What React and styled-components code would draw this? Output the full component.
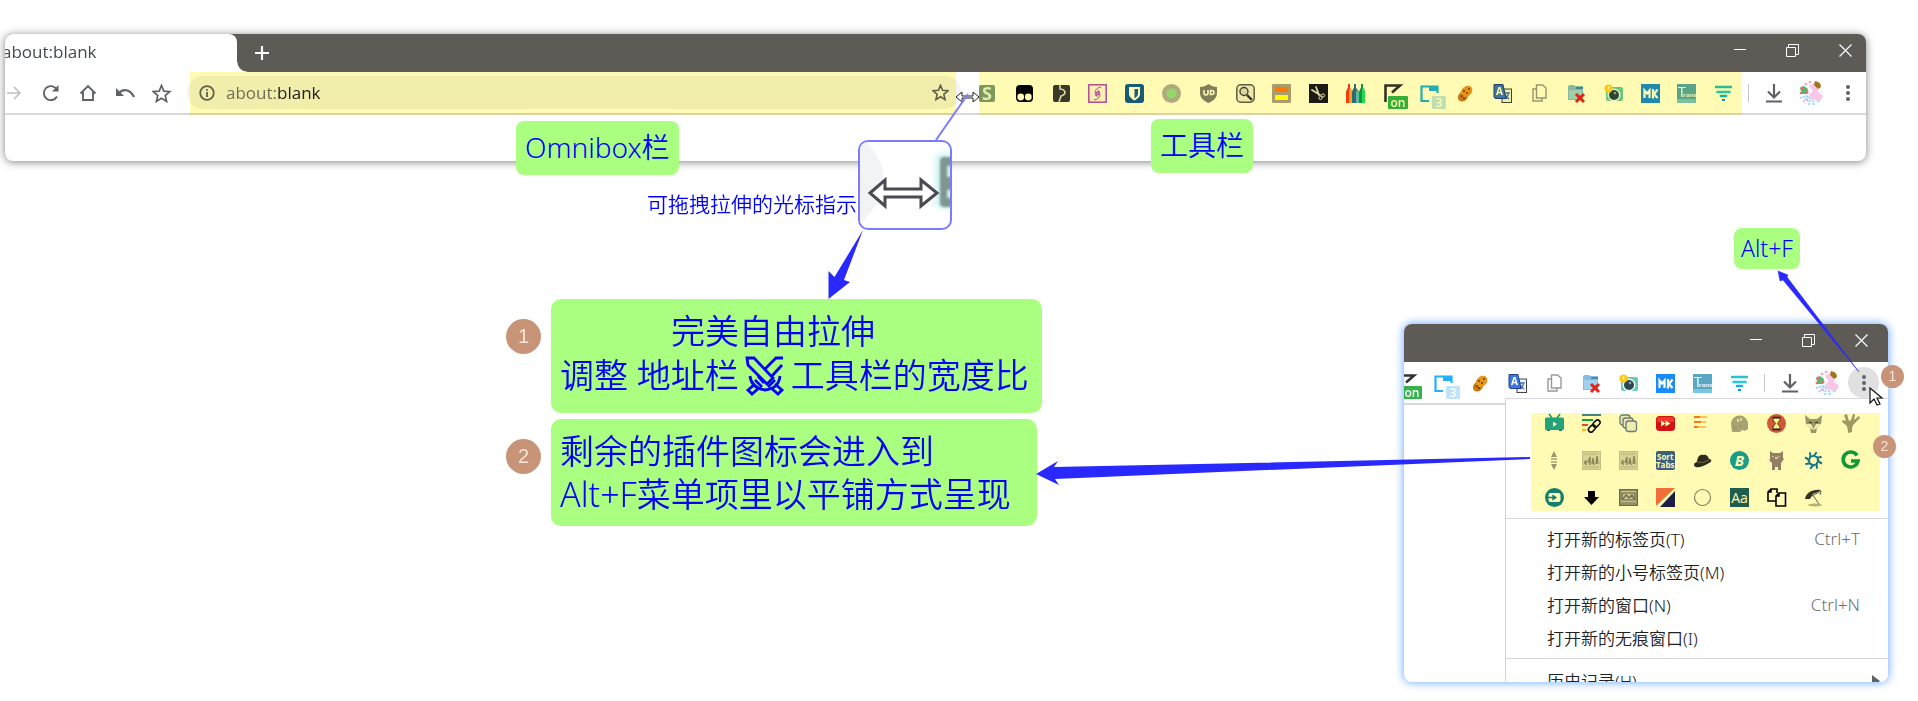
import styled, { createGlobalStyle, css } from "styled-components";

const GlobalStyle = createGlobalStyle`
    *{
        box-sizing: border-box;
    }
    body{
        margin: 0;
        background: #fff;
        font-family: "Open Sans", "Noto Sans CJK SC", sans-serif;
    }
    button{
        padding: 0;
        border: 0;
        background: none;
        font: inherit;
        color: inherit;
    }
`

/* extension icons, all drawn on a 19 x 19 grid */
const glyphs = {
    stylus: <>
        <rect x="1" y="1" width="16" height="17" rx="2" fill="#7d9a86" />
        <text x="9" y="16" fontSize="18" fontWeight="700" textAnchor="middle" fill="#dff5e8">S</text>
    </>,
    monkey: <>
        <path d="M1 5q0-4 4-4h9q4 0 4 4v9q0 4-4 4H5q-4 0-4-4z" fill="#000" />
        <circle cx="5.700" cy="13" r="3.400" fill="#fff" />
        <circle cx="13.300" cy="13" r="3.400" fill="#fff" />
    </>,
    puzzle: <>
        <rect x="1" y="1" width="17" height="17" rx="2" fill="#3a3a3a" />
        <path d="M8 1v4q4 0 5 3 0 3-4 4-1 3-2 6" stroke="#ddd" strokeWidth="1.600" fill="none" />
    </>,
    spiral: <>
        <rect x=".8" y=".8" width="17.400" height="17.400" fill="#fdf3ff" stroke="#b04fd0" strokeWidth="1.500" />
        <path d="M13 3Q7 4 7 9q1 3 4 1V7q-3-1-3 5M6 16q6-1 6-6-1-3-4-1v3q3 1 3-5" stroke="#b04fd0" strokeWidth="1" fill="none" />
    </>,
    shield: <>
        <rect width="19" height="19" rx="3" fill="#175ea8" />
        <path d="M4 3h11v7c0 3-3 5-5.500 6.500C7 15 4 13 4 10z" fill="#fff" />
        <path d="M9.500 5H13v5c0 2-2 3-3.500 4.500z" fill="#175ea8" />
    </>,
    dot: <>
        <circle cx="9.500" cy="9.500" r="9.500" fill="#aeaeae" />
        <circle cx="9.500" cy="9.500" r="5" fill="#93dd92" />
    </>,
    ublock: <>
        <path d="M9.500 0C12 2 15 3 18 3v6c0 5-4 8-8.500 10C5 17 1 14 1 9V3c3 0 6-1 8.500-3z" fill="#808080" />
        <path d="M5 6v3q0 2 2 2t2-2V6M11.500 6.500h1q2.500 0 2.500 2t-2.500 2h-1z" fill="none" stroke="#fff" strokeWidth="1.500" />
    </>,
    search: <>
        <rect x=".8" y=".8" width="17.400" height="17.400" rx="4" fill="#eee" stroke="#5d5d5d" strokeWidth="1.500" />
        <circle cx="8" cy="7.500" r="4" fill="#d8dde0" stroke="#444" strokeWidth="1.400" />
        <path d="M11 11l5 5" stroke="#333" strokeWidth="2.400" />
    </>,
    bars: <>
        <rect width="19" height="19" rx="1" fill="#aaa098" />
        <rect x="3" y="3" width="13" height="5" fill="#ff7b00" />
        <rect x="3" y="11" width="13" height="5" fill="#ff0" />
    </>,
    scissors: <>
        <rect width="19" height="19" fill="#1b1b1b" />
        <path d="M3 6l8 5M7 3l3 8" stroke="#ddd" strokeWidth="1.800" strokeLinecap="round" />
        <circle cx="11.500" cy="14" r="1.600" fill="none" stroke="#ddd" />
        <circle cx="14" cy="11.500" r="1.600" fill="none" stroke="#ddd" />
    </>,
    pencils: <>
        <path d="M0 8l1-3 1-1V0h2v4l1 1 1 3v11H0z" fill="#f53b18" />
        <path d="M3 5h2l1 3v11H3z" fill="#ffa51d" />
        <path d="M6 8l1-3 1-1V0h2v4l1 1 2 3v11H6z" fill="#3368ad" />
        <path d="M10 6l3 2v11h-3z" fill="#5abde0" />
        <path d="M13 8l1-3 1-1V0h2v4l1 1 1 3v11h-6z" fill="#12964b" />
        <path d="M16 5h2l1 3v11h-3z" fill="#1fe063" />
    </>,
    turn: <>
        <path d="M2.500 18V1.500H17L9 8.500" fill="none" stroke="#333" strokeWidth="2.600" />
        <rect x="5" y="12" width="20" height="13" rx="1" fill="#35b34a" />
        <text x="15" y="22.500" fontSize="12" fontWeight="600" textAnchor="middle" fill="#fff">on</text>
    </>,
    tabs: <>
        <path d="M9 17H1.500V2.500h16V9" fill="none" stroke="#22b0ff" strokeWidth="2.200" />
        <path d="M9 2h9v5H9z" fill="#22b0ff" />
        <rect x="12" y="12" width="14" height="13" rx="1" fill="#bfe3fd" />
        <text x="19" y="22.500" fontSize="12" fontWeight="600" textAnchor="middle" fill="#fff">3</text>
    </>,
    cookie: <>
        <ellipse cx="7" cy="12.500" rx="5.500" ry="4.500" fill="#c8770c" transform="rotate(-45 7 12.500)" />
        <ellipse cx="10.500" cy="7.500" rx="6.500" ry="5" fill="#e8961a" transform="rotate(-40 10.500 7.500)" />
        <g fill="#6b3b05"><circle cx="8" cy="7" r="1" /><circle cx="13" cy="5" r="1" /><circle cx="11" cy="9" r="1" /><circle cx="6" cy="12" r="1" /><circle cx="8" cy="14" r="1" /></g>
    </>,
    translate: <>
        <rect x="9" y="5" width="9.500" height="13.500" fill="#f3f3f3" stroke="#444" />
        <path d="M12 9h4l-3 6M12 11l4 4" stroke="#3b6fd0" strokeWidth="1.300" fill="none" />
        <path d="M1 .5h9l3 14H3q-2 0-2-2z" fill="#3d78e0" stroke="#25408a" />
        <text x="6.500" y="11" fontSize="10" fontWeight="700" textAnchor="middle" fill="#fff">A</text>
    </>,
    copy: <>
        <path d="M6.500 1h6l3.500 3v10H6.500zM6 5H3v12h9v-3" fill="none" stroke="#999" strokeWidth="1.400" />
    </>,
    folder: <>
        <path d="M1 3q0-2 2-2h4l1 1h8v14H1z" fill="#83bde0" />
        <path d="M9 3h7v2H9z" fill="#438cb7" />
        <path d="M2 6h13v9H2z" fill="#a0d2ee" />
        <path d="M9 10l8 8M17 10l-8 8" stroke="#e0251b" strokeWidth="3" />
    </>,
    camera: <>
        <rect x="2" y="3" width="17" height="14" rx="2" fill="#67cbb0" />
        <circle cx="10" cy="11" r="6.500" fill="#f4f8f8" />
        <circle cx="10" cy="11" r="5" fill="#2e4650" />
        <circle cx="11" cy="9" r="1.300" fill="#8fa7b0" />
        <circle cx="4.500" cy="4.500" r="4" fill="#ffca16" />
        <path d="M4.500 2.500v3" stroke="#fff" strokeWidth="1.300" />
    </>,
    mk: <>
        <rect width="19" height="19" fill="#1c8cf5" />
        <path d="M3.500 14V6.500l2.500 3 2.500-3V14M12 5v9.500M16.500 5.500L13 10l3.500 4" fill="none" stroke="#fff" strokeWidth="2.200" />
    </>,
    trans: <>
        <rect width="19" height="19" fill="#5aa7c4" />
        <path d="M0 15h19v4H0z" fill="#79c5e4" />
        <text x="1" y="13" fontSize="14" fill="#fff">T</text>
        <text x="6" y="13" fontSize="6" fontWeight="700" fill="#e7f6ff">rans</text>
    </>,
    filter: <>
        <path d="M1 3h17" stroke="#27c1d0" strokeWidth="2.600" />
        <path d="M3.500 8h12" stroke="#25cbdf" strokeWidth="2.600" strokeLinecap="round" />
        <path d="M7 12h5" stroke="#15b3e8" strokeWidth="2.600" strokeLinecap="round" />
        <path d="M8 15h3v2H8z" fill="#1193d8" />
    </>,
    tv: <>
        <path d="M4 0l3 4M15 0l-3 4" stroke="#23a4ac" strokeWidth="1.800" />
        <rect x="0" y="3.500" width="19" height="12.500" rx="1.500" fill="#23a4ac" />
        <path d="M2 16h3v1H2zM14 16h3v1h-3z" fill="#14797f" />
        <path d="M8 7.500l4 2.500-4 3z" fill="#fff" />
    </>,
    links: <>
        <path d="M0 1h19" stroke="#4386b5" strokeWidth="2" />
        <path d="M0 6h11" stroke="#19a34b" strokeWidth="2" />
        <path d="M0 11h6" stroke="#ee4b3b" strokeWidth="2" />
        <path d="M0 16h4" stroke="#ffc400" strokeWidth="2" />
        <g fill="none" stroke="#111" strokeWidth="1.600">
            <rect x="10.500" y="7" width="8" height="5" rx="2.500" transform="rotate(-45 14.500 9.500)" />
            <rect x="6" y="12" width="8" height="5" rx="2.500" transform="rotate(-45 10 14.500)" />
        </g>
    </>,
    stack: <g fill="#eef1f7" stroke="#6a7da8" strokeWidth="1.300">
        <rect x="1" y="1" width="10" height="10" rx="2.500" />
        <rect x="4" y="4" width="10" height="10" rx="2.500" />
        <rect x="7" y="7" width="10.500" height="10.500" rx="2.500" />
    </g>,
    forward: <>
        <rect y="2" width="19" height="15" rx="3.500" fill="#d0141b" />
        <path d="M1 5q0-2 3-2h11q3 0 3 2v3H1z" fill="#ee3b3b" />
        <path d="M5 6.500l4.500 3L5 12.500zM9.500 6.500l5 3-5 3z" fill="#fff" />
    </>,
    speed: <>
        <path d="M1 3h6M1 8h7M1 13h4" stroke="#f77b23" strokeWidth="2.200" />
        <path d="M7 3h7M8 8h5M5 13h8" stroke="#ffc48d" strokeWidth="2" />
    </>,
    ghost: <>
        <path d="M1 10a8.500 8.500 0 0117 0v5l-3 2-3-1-2 2H2z" fill="#a7a7a0" />
        <path d="M8 5v3M11 4v3" stroke="#fff" strokeWidth="1.300" />
        <path d="M3 14h4M9 12h3" stroke="#8d8d85" />
    </>,
    hourglass: <>
        <circle cx="9.500" cy="9.500" r="9.500" fill="#d05a4c" />
        <path d="M6 4h7v2L10.500 9.500 13 13v2H6v-2l2.500-3.500L6 6z" fill="#fff3bb" stroke="#3b2b2b" strokeWidth=".8" />
        <path d="M5.500 3.500h8M5.500 15.500h8" stroke="#222" strokeWidth="1.400" />
    </>,
    fox: <>
        <path d="M1 1l5 4h7l5-4-1 9-4 4-1 5H7l-1-5-4-4z" fill="#99998f" />
        <path d="M2 10h5l2.500 5L12 10h5l-4 4-3.500 2L6 14z" fill="#f2f2e8" />
        <path d="M5 8l3 1M14 8l-3 1" stroke="#333" strokeWidth="1.300" />
    </>,
    tree: <path d="M7 19c0-5-1-6-2-8L1 8l1-2 3 1-2-6 3-1 2 7 2-1 2-6 2 0-1 6 5-4 1 2-6 6c-2 2-2 4-2 8z" fill="#9d9c88" />,
    scroll: <>
        <path d="M6 6l3-6 3 6zM6 13l3 6 3-6z" fill="#999" />
        <path d="M6 8h6M6 11h6" stroke="#bcbcb5" strokeWidth="2" />
    </>,
    photo: <>
        <rect x=".5" y=".5" width="18" height="18" fill="#d8d8d0" stroke="#c3c3ba" />
        <path d="M3 13v-3M4 14V9M6 12l2-6v8M10 13l1-6 1 7M14 13l1-8 1 8" stroke="#88887f" strokeWidth="1.400" fill="none" />
        <path d="M2 3h14M2 16h15" stroke="#b6b6ae" />
    </>,
    sort: <>
        <rect width="19" height="19" rx="2" fill="#3d62ac" />
        <text x="1" y="8.500" fontSize="8" fontWeight="700" fill="#fff">Sort</text>
        <text x="18.500" y="17" fontSize="8" fontWeight="700" textAnchor="end" fill="#fff">Tabs</text>
    </>,
    hat: <>
        <path d="M1 14c0-3 3-2 3-4 1-5 3-7 6-6 3-1 5 1 6 4 3 0 3 3 0 4-5 3-14 7-15 2z" fill="#2d2925" />
        <path d="M4 11q6 2 12-2" stroke="#736b61" fill="none" />
    </>,
    bitly: <>
        <circle cx="9.500" cy="9.500" r="9.500" fill="#1aa0c0" />
        <text x="9.500" y="15" fontSize="15" fontWeight="700" fontStyle="italic" textAnchor="middle" fill="#fff">B</text>
    </>,
    cat: <>
        <path d="M3 0l3 2h7l3-2v9l-2 1H5L3 9z" fill="#93838e" />
        <path d="M6 10h7l3-3 1 1-3 4v7h-3v-3H8v3H5v-7L2 9l1-1z" fill="#93838e" />
        <path d="M6 5v1M12 5v1M8 7h3" stroke="#efe8ec" strokeWidth="1.300" />
    </>,
    aperture: <g stroke="#1177c2" fill="none">
        {[0, 45, 90, 135, 180, 225, 270, 315].map((angle) => (
            <path key={angle} d="M7.500 5.500Q11 5 12.500 1" strokeWidth="2" transform={`rotate(${angle} 9.500 9.500)`} />
        ))}
        <circle cx="9.500" cy="9.500" r="4.500" strokeWidth="1.200" />
    </g>,
    gee: <path d="M16 4.500A7.500 7.500 0 1017 10h-7" fill="none" stroke="#0f9d4e" strokeWidth="3.600" />,
    login: <>
        <circle cx="9.500" cy="9.500" r="9.500" fill="#13809c" />
        <rect x="3.500" y="5" width="12" height="9" rx="2" fill="#fff" />
        <path d="M3 9.500h6M8 7.500l3 2-3 2z" stroke="#13809c" strokeWidth="1.300" fill="#13809c" />
    </>,
    down: <path d="M6 3h7v6h4l-7.500 8L2 9h4z" fill="#000" />,
    picture: <>
        <rect x=".8" y="1.800" width="17.400" height="15.400" fill="#c6c6bf" stroke="#666" strokeWidth="1.500" />
        <path d="M3 5h13v7H3zM4 11l3-4 3 3 3-3 2 4M2 15h15" stroke="#666" strokeWidth="1.200" fill="none" />
    </>,
    split: <>
        <path d="M0 0h19L0 18z" fill="#f2704f" />
        <path d="M19 3v16H4z" fill="#1d1e5c" />
    </>,
    ring: <circle cx="9.500" cy="9.500" r="8" fill="none" stroke="#87877a" strokeWidth="1.200" />,
    aa: <>
        <rect width="19" height="19" fill="#1f6070" />
        <text x="9.500" y="15" fontSize="14" textAnchor="middle" fill="#fff">Aa</text>
    </>,
    pages: <g fill="none" stroke="#000" strokeWidth="1.600">
        <path d="M9 13H1V4l3-3h6v4M4 1v3H1" />
        <path d="M9 8l3-3h6.500v13H9zM12 5v3H9" />
    </g>,
    umbrella: <>
        <path d="M1 11C2 5 8 1 17 2L14 4 9 6 6 11z" fill="#333" />
        <path d="M8 8l9-5-1 4M8 6l7 10" stroke="#666" fill="none" />
        <ellipse cx="11" cy="17" rx="7" ry="1.500" fill="#b5b5a4" />
    </>,
}

const overflowing = ["turn", "tabs", "cookie", "translate", "copy", "folder", "camera", "mk", "trans", "filter"]
const pinned = ["stylus", "monkey", "puzzle", "spiral", "shield", "dot", "ublock", "search", "bars", "scissors", "pencils", ...overflowing]
const tiled = [
    "tv", "links", "stack", "forward", "speed", "ghost", "hourglass", "fox", "tree",
    "scroll", "photo", "photo", "sort", "hat", "bitly", "cat", "aperture", "gee",
    "login", "down", "picture", "split", "ring", "aa", "pages", "umbrella",
]

function Extension({ name }) {
    return (
        <ExtButton type="button" aria-label={name}>
            <Glyph viewBox="0 0 19 19">{glyphs[name]}</Glyph>
        </ExtButton>
    );
}

function WindowControls({ tucked }) {
    return (
        <Controls $tucked={tucked}>
            <ControlButton type="button" aria-label="minimize">
                <svg width="12" height="12"><path d="M0 5.500h12" stroke="#fff" /></svg>
            </ControlButton>
            <ControlButton type="button" aria-label="restore">
                <svg width="13" height="13" fill="none" stroke="#fff"><path d="M.5 3.500h9v9h-9zM2.500 3V.5h10v10H10" /></svg>
            </ControlButton>
            <ControlButton type="button" aria-label="close">
                <svg width="13" height="13" stroke="#fff" strokeWidth="1.200"><path d="M.5.5l12 12M12.500.5l-12 12" /></svg>
            </ControlButton>
        </Controls>
    );
}

function Avatar() {
    return (
        <svg width="26" height="26" viewBox="0 0 26 26">
            <circle cx="13" cy="13" r="12.500" fill="#f6f8fb" />
            <g stroke="#8ed4f3" strokeWidth="1.600" strokeDasharray="2 1">
                <path d="M2 18l8-2M5 22l6-6M11 25l1-8M16 25l-2-7M21 22l-6-5" />
            </g>
            <path d="M11 6l5-3 4 3v6l5 4-3 5-9-2-2-4 4-4z" fill="#f9c6ea" />
            <path d="M17 1q6 1 6 6l-3 2-4-4z" fill="#a3741c" />
            <path d="M2 8l4-2 4 3-1 5H4z" fill="#54b96b" />
            <g fill="#f2676b"><circle cx="4" cy="8" r="1.500" /><circle cx="9" cy="12" r="1.500" /><circle cx="3" cy="13" r="1.200" /></g>
            <g fill="#f5a9b8"><circle cx="8" cy="4" r="1.300" /><circle cx="12" cy="2" r="1.300" /><circle cx="9" cy="20" r="1.200" /></g>
        </svg>
    );
}

function ToolbarEnd({ pressed }) {
    return (
        <>
            <Divider />
            <NavButton type="button" aria-label="downloads">
                <svg width="18" height="20" fill="none" stroke="#5f6368" strokeWidth="2.200"><path d="M9 1v13M3 8.500L9 14.500l6-6M1 18.500h16" /></svg>
            </NavButton>
            <NavButton type="button" aria-label="profile"><Avatar /></NavButton>
            <NavButton type="button" aria-label="menu" $pressed={pressed}>
                <svg width="6" height="18" fill="#5f6368"><circle cx="3" cy="3" r="2" /><circle cx="3" cy="9" r="2" /><circle cx="3" cy="15" r="2" /></svg>
            </NavButton>
        </>
    );
}

const star = "M9.500 1.500l2.300 5.600 6 .5-4.600 3.900 1.400 5.900-5.100-3.200-5.100 3.200 1.400-5.900L1.200 7.600l6-.5z"

function BrowserWindow() {
    return (
        <MainWindow>
            <TitleBar>
                <Tab>about:blank</Tab>
                <NewTab type="button" aria-label="new tab">
                    <svg width="14" height="14" stroke="#fff" strokeWidth="2.200"><path d="M7 0v14M0 7h14" /></svg>
                </NewTab>
                <WindowControls tucked />
            </TitleBar>
            <Toolbar $lead>
                <NavButton type="button" aria-label="forward">
                    <svg width="16" height="16" fill="none" stroke="#bdc0c3" strokeWidth="1.600"><path d="M1 8h13M8 2l6 6-6 6" /></svg>
                </NavButton>
                <NavButton type="button" aria-label="reload">
                    <svg width="18" height="18" fill="none" stroke="#5f6368" strokeWidth="1.900"><path d="M15 12.500A7 7 0 1114.500 5" /><path d="M16.500 1v6.500H10z" fill="#5f6368" stroke="none" /></svg>
                </NavButton>
                <NavButton type="button" aria-label="home">
                    <svg width="18" height="18" fill="none" stroke="#5f6368" strokeWidth="1.900"><path d="M1.500 9.500L9 2l7.500 7.500M4 8v8h10V8" /></svg>
                </NavButton>
                <NavButton type="button" aria-label="undo">
                    <svg width="20" height="14"><path d="M3 8C8 2 15 3 19 11" fill="none" stroke="#5f6368" strokeWidth="2.200" /><path d="M1 2v8h8z" fill="#5f6368" /></svg>
                </NavButton>
                <NavButton type="button" aria-label="bookmarks">
                    <svg width="20" height="19" fill="none" stroke="#5f6368" strokeWidth="1.700"><path d={star} /></svg>
                </NavButton>
                <OmniboxArea>
                    <Omnibox>
                        <svg width="16" height="16" fill="none" stroke="#5f6368" strokeWidth="1.800"><circle cx="8" cy="8" r="6.800" /><path d="M8 7v5M8 4v1.800" /></svg>
                        <Scheme htmlFor="url">about:</Scheme>
                        <UrlInput id="url" type="text" defaultValue="blank" />
                        <StarButton type="button" aria-label="bookmark this page">
                            <svg width="17" height="17" viewBox="0 0 19 19" fill="none" stroke="#5f6368" strokeWidth="1.800"><path d={star} /></svg>
                        </StarButton>
                    </Omnibox>
                </OmniboxArea>
                <ExtStrip $count={21} $marked>
                    {pinned.map((name) => <Extension key={name} name={name} />)}
                </ExtStrip>
                <ToolbarEnd />
            </Toolbar>
            <BlankPage />
        </MainWindow>
    );
}

function MenuWindow() {
    return (
        <Popup>
            <PopupFrame>
                <TitleBar>
                    <WindowControls />
                </TitleBar>
                <Toolbar>
                    <ExtStrip $count={10}>
                        {overflowing.map((name) => <Extension key={name} name={name} />)}
                    </ExtStrip>
                    <ToolbarEnd pressed />
                </Toolbar>
                <Menu>
                    <Tiles>
                        {tiled.map((name, i) => <Extension key={i} name={name} />)}
                    </Tiles>
                    <MenuGroup>
                        <MenuItem type="button">打开新的标签页(T)<Shortcut>Ctrl+T</Shortcut></MenuItem>
                        <MenuItem type="button">打开新的小号标签页(M)</MenuItem>
                        <MenuItem type="button">打开新的窗口(N)<Shortcut>Ctrl+N</Shortcut></MenuItem>
                        <MenuItem type="button">打开新的无痕窗口(I)</MenuItem>
                    </MenuGroup>
                    <MenuGroup $last>
                        <MenuItem type="button">历史记录(H)<Submenu viewBox="0 0 8 12"><path d="M0 0l8 6-8 6z" fill="#5f6368" /></Submenu></MenuItem>
                    </MenuGroup>
                </Menu>
            </PopupFrame>
            <Pin $top={41} $right={-16}>1</Pin>
            <Pin $top={111} $right={-8}>2</Pin>
        </Popup>
    );
}

function Swords() {
    return (
        <SwordsIcon viewBox="0 0 40 40" fill="none" stroke="#00f" strokeWidth="2.800">
            <path d="M2 2h7l19 20-6 6L3 9zM38 2h-7L20 13M37 9L26 21M13 20l6 7" />
            <path d="M5 20c1 10 8 13 15 14 8-1 14-4 15-14M10 24l7 7M30 24l-7 7" />
            <path d="M10 28l-7 6 4 4 7-6M30 28l7 6-4 4-7-6" />
        </SwordsIcon>
    );
}

function App() {
    return (
        <Desktop>
            <GlobalStyle />
            <BrowserWindow />
            <Lower>
                <Notes>
                    <NoteRow>
                        <Step>1</Step>
                        <Note>
                            <Indented>完美自由拉伸</Indented>
                            <span>调整 地址栏<Swords />工具栏的宽度比</span>
                        </Note>
                    </NoteRow>
                    <NoteRow>
                        <Step>2</Step>
                        <Note $tight>
                            <span>剩余的插件图标会进入到</span>
                            <span>Alt+F菜单项里以平铺方式呈现</span>
                        </Note>
                    </NoteRow>
                </Notes>
                <MenuWindow />
            </Lower>
            <Tag $x={516} $y={121} $tall>Omnibox栏</Tag>
            <Tag $x={1151} $y={119} $tall>工具栏</Tag>
            <Tag $x={1734} $y={228}>Alt+F</Tag>
            <Magnifier>
                <span>可拖拽拉伸的光标指示</span>
                <Lens>
                    <svg viewBox="0 0 90 86">
                        <path d="M6 0Q24 18 24 38T0 82V0z" fill="#f1f3f4" />
                        <rect x="76" y="12" width="18" height="54" rx="4" fill="#c4f2f2" filter="blur(3px)" />
                        <rect x="80" y="15" width="14" height="50" rx="4" fill="#7f9691" filter="blur(1px)" />
                        <path d="M92 24h-5v11h5M92 48h-5v8h5" fill="#d2eee6" filter="blur(1px)" />
                        <path d="M10 51L25 38v9h36v-9l16 13-16 13v-9H25v9z" fill="#fff" stroke="#4b4953" strokeWidth="3" filter="blur(0.5px)" />
                    </svg>
                </Lens>
            </Magnifier>
            <Arrows>
                <path d="M956 97l6-5v4h11v-4l6 5-6 5v-4h-11v4z" fill="#fff" stroke="#222" />
                <path d="M968 94L936 140" stroke="#7b7bff" strokeWidth="2" />
                <g fill="#2828ff">
                    <path d="M863 230L844 280l6 2-21.500 17V271l6 6z" />
                    <path d="M1530 457v2L1055 479l4 6-23-11 22-13-4 6z" />
                    <path d="M1859 372L1783 280l-3 1-2-10 10 4-1 2z" stroke="#2828ff" strokeWidth=".5" />
                </g>
                <path d="M1870 388v15l4-4 3 6 3-1-3-6h5z" fill="#fff" stroke="#111" strokeWidth="1.200" />
            </Arrows>
        </Desktop>
    );
}

const highlight = css`
    content: "";
    position: absolute;
    background: #fffab4;
    mix-blend-mode: multiply;
    pointer-events: none;
`

const Desktop = styled.main`
    position: relative;
    min-height: 100vh;
    overflow: hidden;
    background: #fff;
    padding-top: 34px;
`

const MainWindow = styled.section`
    margin: 0 52px 0 5px;
    border-radius: 8px;
    overflow: hidden;
    background: #fff;
    box-shadow: 0 1px 8px rgba(0, 0, 0, .5);
`

const TitleBar = styled.header`
    display: flex;
    height: 38px;
    background: #5e5a56;
`

const Tab = styled.div`
    position: relative;
    width: 232px;
    border-top-right-radius: 8px;
    background: #fff;
    color: #45494d;
    font-size: 17px;
    line-height: 36px;
    text-indent: -3px;
    &::after{
        content: "";
        position: absolute;
        left: 100%;
        bottom: 0;
        width: 10px;
        height: 10px;
        background: radial-gradient(circle at 100% 0, transparent 9px, #fff 10px);
    }
`

const NewTab = styled.button`
    width: 50px;
    display: grid;
    place-items: center;
`

const Controls = styled.div`
    display: flex;
    align-items: center;
    margin-left: auto;
    margin-right: ${({ $tucked }) => ($tucked ? "-6px" : "0")};
    padding-bottom: 6px;
`

const ControlButton = styled.button`
    width: 53px;
    display: grid;
    place-items: center;
`

const Toolbar = styled.nav`
    display: flex;
    align-items: stretch;
    justify-content: flex-end;
    height: 43px;
    border-bottom: 2px solid #dad8de;
    padding-right: ${({ $lead }) => ($lead ? 0 : 6)}px;
    ${({ $lead }) => $lead && css`
        > :first-child{
            margin-left: -10px;
        }
    `}
`

const NavButton = styled.button`
    flex: none;
    width: 37px;
    padding-top: 1px;
    display: grid;
    place-items: center;
    background: ${({ $pressed }) => ($pressed ? "radial-gradient(circle, #e0e0e0 15px, transparent 16px)" : "none")};
`

const Divider = styled.span`
    flex: none;
    width: 1px;
    height: 18px;
    margin: 0 6px;
    align-self: center;
    background: #c6c6ca;
`

const OmniboxArea = styled.div`
    position: relative;
    flex: 1;
    display: flex;
    align-items: center;
    padding: 0 8px 0 7px;
    &::after{
        ${highlight}
        inset: 0 13px -2px 10px;
    }
`

const Omnibox = styled.div`
    flex: 1;
    display: flex;
    align-items: center;
    height: 33px;
    padding: 0 12px;
    border-radius: 17px;
    background: #f1f3f4;
    font-size: 17px;
`

const Scheme = styled.label`
    margin-left: 11px;
    color: #6f7275;
`

const UrlInput = styled.input`
    flex: 1;
    min-width: 0;
    border: 0;
    padding: 0;
    outline: 0;
    background: none;
    color: #202124;
    font: inherit;
`

const StarButton = styled.button`
    display: grid;
    place-items: center;
`

const ExtStrip = styled.div`
    position: relative;
    flex: none;
    display: flex;
    width: ${({ $count }) => ($count > 10 ? 773 : 370)}px;
    padding-top: 2px;
    ${({ $marked }) => $marked && css`
        &::after{
            ${highlight}
            inset: 0 0 -2px 10px;
        }
    `}
`

const ExtButton = styled.button`
    flex: 1;
    display: grid;
    place-items: center;
`

const Glyph = styled.svg`
    width: 19px;
    height: 19px;
    overflow: visible;
`

const BlankPage = styled.div`
    height: 46px;
`

const Lower = styled.div`
    display: flex;
    align-items: flex-start;
    justify-content: space-between;
    padding: 138px 30px 0 506px;
`

const Notes = styled.div`
    display: flex;
    flex-direction: column;
    gap: 6px;
`

const NoteRow = styled.div`
    display: flex;
    align-items: flex-start;
    gap: 10px;
`

const Step = styled.span`
    flex: none;
    width: 35px;
    margin-top: 20px;
    border-radius: 50%;
    background: #c89478;
    color: #f6e3d8;
    font-family: "Liberation Sans", sans-serif;
    font-size: 20px;
    line-height: 35px;
    text-align: center;
`

const labelFont = css`
    font-family: "Noto Sans", "Noto Sans CJK SC", sans-serif;
    font-weight: 350;
`

const Note = styled.p`
    ${labelFont}
    display: flex;
    flex-direction: column;
    min-width: 486px;
    margin: 0;
    padding: ${({ $tight }) => ($tight ? "11px 12px 10px 9px" : "10px 13px 16px 9px")};
    border-radius: 10px;
    background: #aaff80;
    color: #00f;
    font-size: 34px;
    line-height: ${({ $tight }) => ($tight ? 43 : 44)}px;
    white-space: nowrap;
`

const Indented = styled.span`
    padding-left: 111px;
`

const SwordsIcon = styled.svg`
    width: 40px;
    height: 40px;
    margin: 0 6px;
    vertical-align: -8px;
`

const Popup = styled.section`
    position: relative;
    width: 484px;
    margin-top: 25px;
`

const PopupFrame = styled.div`
    height: 358px;
    border-radius: 8px;
    overflow: hidden;
    background: #fff;
    box-shadow: 0 0 8px 1px #78b0ff;
`

const Menu = styled.div`
    position: relative;
    margin: -7px 0 0 101px;
    border: solid #d6d6da;
    border-width: 1px 0 0 1px;
    background: #fff;
`

const Tiles = styled.div`
    position: relative;
    display: grid;
    grid-template-columns: repeat(9, 1fr);
    row-gap: 18px;
    margin: 14px 8px 7px 25px;
    padding: 1px 11px 4px 5px;
    &::after{
        ${highlight}
        inset: 0;
    }
`

const MenuGroup = styled.div`
    border-top: 1px solid #d6d6da;
    padding: ${({ $last }) => ($last ? "6px 0 4px" : "4px 0 3px")};
`

const MenuItem = styled.button`
    ${labelFont}
    display: flex;
    align-items: center;
    width: 100%;
    height: 33px;
    padding: 0 28px 2px 41px;
    color: #202124;
    font-size: 17px;
`

const Shortcut = styled.kbd`
    margin-left: auto;
    color: #6b6f75;
    font: inherit;
`

const Submenu = styled.svg`
    width: 8px;
    margin: 0 -20px 0 auto;
`

const Pin = styled.span`
    position: absolute;
    top: ${({ $top }) => $top}px;
    right: ${({ $right }) => $right}px;
    width: 23px;
    border-radius: 50%;
    background: #c89478;
    color: #f6e3d8;
    font-family: "Liberation Sans", sans-serif;
    font-size: 14px;
    line-height: 23px;
    text-align: center;
`

const Tag = styled.span`
    ${labelFont}
    position: absolute;
    left: ${({ $x }) => $x}px;
    top: ${({ $y }) => $y}px;
    padding: ${({ $tall }) => ($tall ? "6px 9px 8px" : "3px 7px 4px")};
    border-radius: 8px;
    background: #aaff80;
    color: #00f;
    font-size: ${({ $tall }) => ($tall ? 28 : 23)}px;
    line-height: ${({ $tall }) => ($tall ? 40 : 34)}px;
`

const Magnifier = styled.div`
    ${labelFont}
    position: absolute;
    left: 647px;
    top: 140px;
    display: flex;
    align-items: center;
    color: #00f;
    font-size: 21px;
    span{
        margin: 35px 1px 0 0;
    }
`

const Lens = styled.div`
    width: 94px;
    height: 90px;
    border: 2px solid #7b7bff;
    border-radius: 10px;
    overflow: hidden;
    background: #fff;
    svg{
        display: block;
    }
`

const Arrows = styled.svg`
    position: absolute;
    inset: 0;
    width: 100%;
    height: 100%;
    pointer-events: none;
`

export default App;
